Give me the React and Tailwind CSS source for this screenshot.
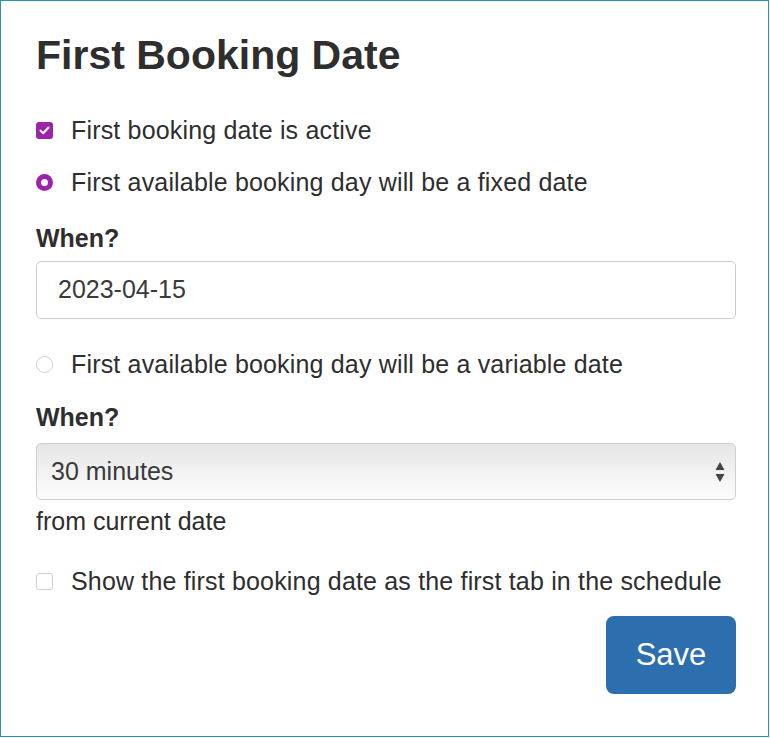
import React, { useState } from 'react';

const font = { fontFamily: '"Liberation Sans", Arial, sans-serif' };

const Check = ({ checked }) => (
  <span
    className={`flex h-[17px] w-[17px] shrink-0 items-center justify-center rounded-[3px] ${
      checked ? 'bg-[#9b24a8]' : 'border border-[#cfcfcf] bg-white'
    }`}
  >
    {checked && (
      <svg width="11" height="9" viewBox="0 0 11 9" fill="none">
        <path d="M1.5 4.6 4.2 7.2 9.5 1.5" stroke="white" strokeWidth="2" strokeLinecap="round" strokeLinejoin="round" />
      </svg>
    )}
  </span>
);

const Radio = ({ checked }) => (
  <span
    className={`flex h-[17px] w-[17px] shrink-0 items-center justify-center rounded-full ${
      checked ? 'bg-[#9b24a8]' : 'border border-[#cfcfcf] bg-white'
    }`}
  >
    {checked && <span className="h-[7px] w-[7px] rounded-full bg-white" />}
  </span>
);

const Option = ({ children, control }) => (
  <div className="flex h-[30px] items-center gap-[18px] text-[25px] leading-[30px] tracking-[0.17px] text-[#2e2e2e]">
    {control}
    <span>{children}</span>
  </div>
);

export default function App() {
  const [active] = useState(true);

  return (
    <div style={font} className="h-[737px] w-[769px] border border-[#2297a6] bg-white">
      <div className="flex flex-col pl-[35px] pr-[32px] pt-[28px]">
        <h1 className="text-[41px] font-semibold leading-[52px] text-[#2e2e2e]">First Booking Date</h1>

        <div className="mt-[34px]">
          <Option control={<Check checked={active} />}>First booking date is active</Option>
        </div>
        <div className="mt-[22px]">
          <Option control={<Radio checked />}>First available booking day will be a fixed date</Option>
        </div>

        <div className="mt-[26px] text-[25px] font-bold leading-[30px] text-[#2e2e2e]">When?</div>
        <div className="mt-[8px] flex h-[58px] items-center rounded-[5px] border border-[#cccccc] px-[21px] text-[25px] text-[#3a3a3a]">
          2023-04-15
        </div>

        <div className="mt-[30px]">
          <Option control={<Radio />}>First available booking day will be a variable date</Option>
        </div>

        <div className="mt-[23px] text-[25px] font-bold leading-[30px] text-[#2e2e2e]">When?</div>
        <div className="mt-[11px] flex h-[57px] items-center justify-between rounded-[5px] border border-[#cfcfcf] bg-gradient-to-b from-[#e6e6e6] to-[#fdfdfd] pl-[14px] pr-[10px] text-[25px] text-[#3a3a3a]">
          <span>30 minutes</span>
          <svg width="10" height="22" viewBox="0 0 10 22">
            <path d="M5 1 9.5 9H.5z" fill="#444" />
            <path d="M5 21 9.5 13H.5z" fill="#444" />
          </svg>
        </div>
        <div className="mt-[6px] text-[25px] leading-[30px] text-[#2e2e2e]">from current date</div>

        <div className="mt-[30px]">
          <Option control={<Check />}>Show the first booking date as the first tab in the schedule</Option>
        </div>

        <div className="mt-[20px] flex justify-end">
          <button className="h-[78px] w-[130px] rounded-[8px] bg-[#2d6eae] text-[31px] text-white">Save</button>
        </div>
      </div>
    </div>
  );
}
